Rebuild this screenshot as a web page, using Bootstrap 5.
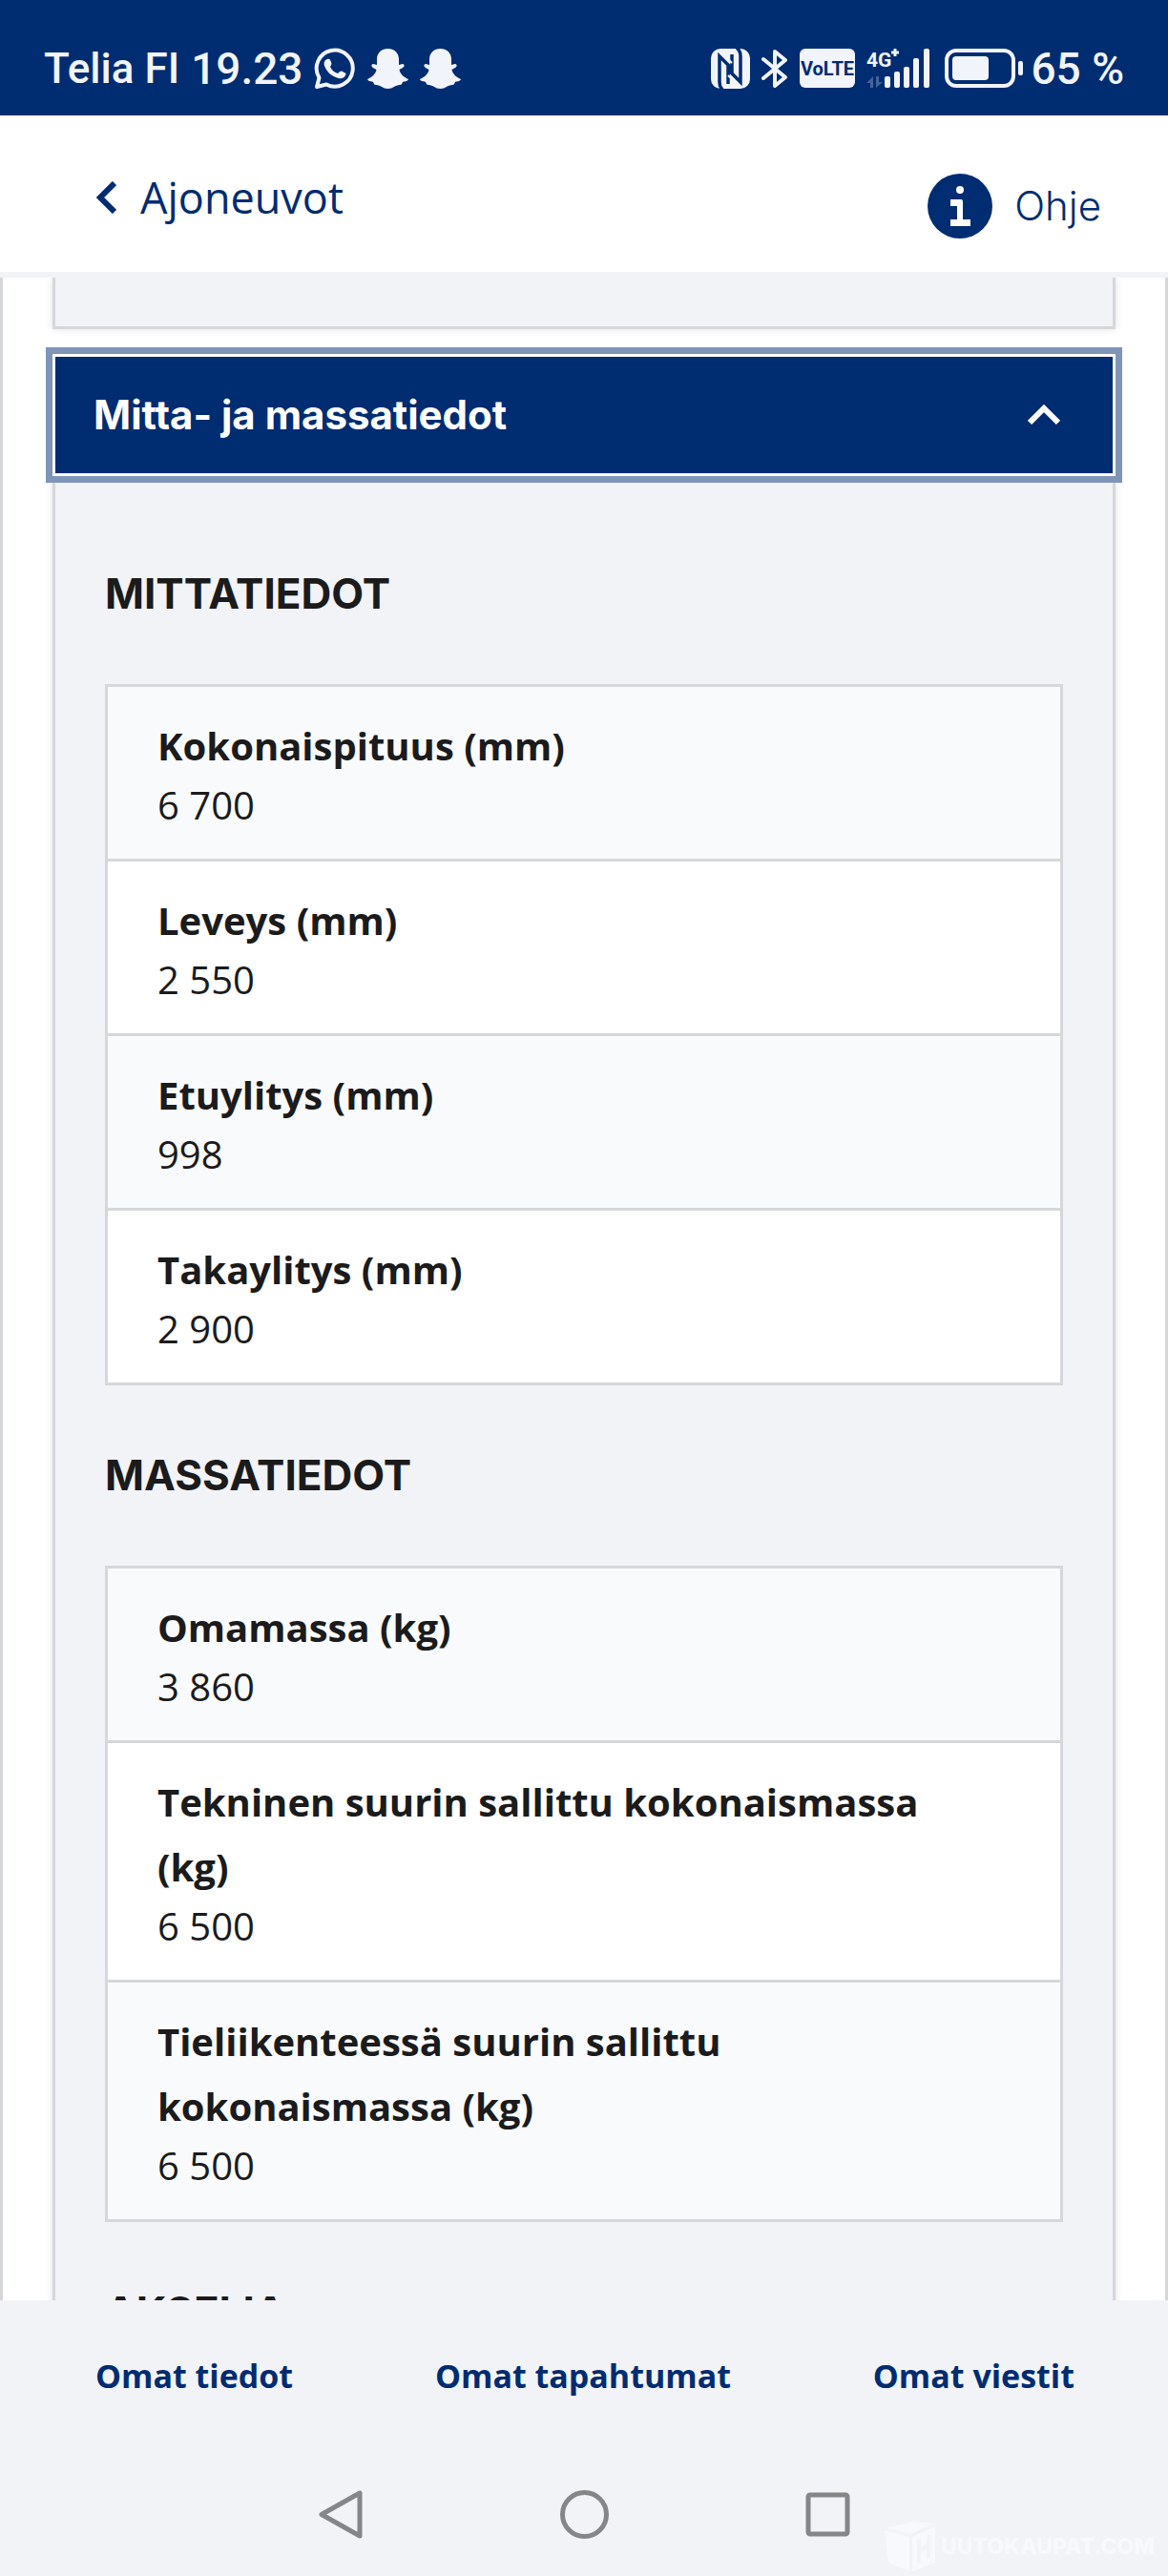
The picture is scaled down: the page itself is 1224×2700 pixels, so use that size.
<!DOCTYPE html>
<html lang="fi">
<head>
<meta charset="utf-8">
<meta name="viewport" content="width=device-width, initial-scale=1">
<title>Ajoneuvot</title>
<link href="https://cdn.jsdelivr.net/npm/bootstrap@5.3.0/dist/css/bootstrap.min.css" rel="stylesheet">
<style>
:root { --navy: #002c71; --pale: #f2f3f7; --line: #d6d7da; --ink: #1b1b1c; }
body { font-family: "Open Sans", sans-serif; color: var(--ink); background: #fff; }
.status-bar { background: var(--navy); color: #f1f4fb; font-family: Roboto, sans-serif; font-weight: 500; padding: 23px 46px 0; height: 121px; line-height: 98px; }
.status-bar .carrier { font-size: 44px; }
.status-bar .clock { font-size: 46px; }
.status-bar .icons { gap: 12px; }
.battery { margin-right: -5px; }
.app-header { padding: 0 70px 0 101px; height: 170px; border-bottom: 6px solid var(--pale); }
.app-header a { color: var(--navy); }
.back-link { font-size: 45px; gap: 25px; line-height: 60px; padding-top: 8px; }
.help-link { font-family: Inter, sans-serif; font-weight: 300; font-size: 42px; gap: 23px; line-height: 50px; padding-top: 26px; }
.app-main { border: solid var(--line); border-width: 0 3px; padding: 0 52px; }
.panel { background: var(--pale); border: 3px solid var(--line); box-shadow: 0 0 8px rgba(0,0,0,.12); }
.panel-prev { border-top: 0; height: 54px; margin-bottom: 26px; }
.panel-toggle { background: var(--navy); color: #fff; border: 3px solid #fff; border-radius: 0; box-shadow: 0 0 0 7px #7f95b8; font-family: Inter, sans-serif; font-weight: 700; font-size: 42px; line-height: 60px; padding: 31px 55px 31px 40px; position: relative; z-index: 1; }
.panel-toggle:hover { background: var(--navy); color: #fff; border-color: #fff; }
.panel-open { border-top: 0; padding: 29px 52px 0; }
.section-title { font-family: Inter, sans-serif; font-weight: 700; font-size: 44px; line-height: 61px; margin: 64px 0; }
.facts { border: 3px solid var(--line); margin: 0; font-size: 40px; }
.facts > div { background: #fff; padding: 28px 104px 28px 52px; }
.facts > div:nth-child(odd) { background: #f9fafc; }
.facts > div + div { border-top: 3px solid var(--line); }
.facts dt { font-weight: 700; line-height: 68px; }
.facts dd { margin: 0; line-height: 56px; }
.app-footer { background: var(--pale); }
.tab-links { padding: 0 98px 0 100px; height: 160px; }
.tab-links a { color: var(--navy); font-weight: 700; font-size: 34px; line-height: 50px; padding-bottom: 2px; }
.system-nav { height: 129px; gap: 204px; }
.system-nav button { line-height: 1; border-radius: 0; }
.watermark { position: absolute; right: 14px; bottom: 5px; gap: 5px; color: #f8f9fc; font-family: Inter, sans-serif; font-weight: 800; font-size: 23px; }
svg { display: block; flex: none; }
</style>
</head>
<body class="vh-100 d-flex flex-column overflow-hidden">

<div class="status-bar d-flex justify-content-between flex-shrink-0">
  <div class="d-flex align-items-center icons">
    <span class="carrier">Telia FI</span>
    <span class="clock">19.23</span>
    <svg width="44" height="44" viewBox="0 0 44 44" fill="none" stroke="#f1f4fb"><path d="M3 41 5.500 31.500A19 19 0 1 1 13 38.500Z" stroke-width="4" stroke-linejoin="round"/><path d="M14 12c2-1 3 0 4 3 1 2 0 3-1 5 2 4 5 6 8 7 2-2 3-3 5-2 4 2 4 2 3 4-2 4-6 4-10 2-6-2-10-7-12-12-1-3 0-6 3-7Z" fill="#f1f4fb" stroke="none"/></svg>
    <svg width="43" height="42" viewBox="0 0 43 42" fill="#f1f4fb"><path id="ghost" d="M21.500 0C28 0 33 4.500 33 11v6c2 0 4-2 5.500 0 1 2-3 4-5 5 1 5 5 8 9.500 10-1 3-5 2-6 3-1 2-1 3-3 3-5 0-7 4-12.500 4S14 38 9 38c-2 0-2-1-3-3-1-1-5 0-6-3 4.500-2 8.500-5 9.500-10-2-1-6-3-5-5 1.500-2 3.500 0 5.500 0v-6C10 4.500 15 0 21.500 0Z"/></svg>
    <svg width="43" height="42" viewBox="0 0 43 42" fill="#f1f4fb"><use href="#ghost"/></svg>
  </div>
  <div class="d-flex align-items-center icons">
    <svg width="41" height="42" viewBox="0 0 41 42"><rect width="41" height="42" rx="10" fill="#f1f4fb"/><path d="M12 43Q9 40 9 35V8L22 21V6M27 -1Q31 2 31 8V35L18 22V37" fill="none" stroke="#002c71" stroke-width="3.500"/><path d="M13 6 22 15M18 28 27 37" stroke="#f1f4fb" stroke-width="2"/></svg>
    <svg width="28" height="42" viewBox="0 0 28 42" fill="none" stroke="#f1f4fb" stroke-width="4" stroke-linejoin="round" stroke-linecap="round"><path d="M2 11 25 30 14 39V3L25 12 2 31"/></svg>
    <svg width="58" height="42" viewBox="0 0 58 42"><rect width="58" height="41" rx="6" fill="#f1f4fb"/><text x="29" y="28" text-anchor="middle" font-family="Roboto" font-weight="700" font-size="20" fill="#002c71">VoLTE</text></svg>
    <svg width="70" height="42" viewBox="0 0 70 42" fill="#f1f4fb"><text x="0" y="19" font-family="Roboto" font-weight="700" font-size="21">4G</text><path d="M30 0v8M26 4h8" stroke="#f1f4fb" stroke-width="3"/><path d="M0 36 7 29V41H4V36ZM10 29V41L17 35H13V29Z" fill="#44639b"/><rect x="19" y="29" width="6" height="12" rx="2"/><rect x="29" y="24" width="6" height="17" rx="2"/><rect x="39" y="19" width="6" height="22" rx="2"/><rect x="49" y="10" width="6" height="31" rx="2"/><rect x="60" y="0" width="6" height="41" rx="2"/></svg>
    <svg class="battery" width="83" height="42" viewBox="0 0 83 42" fill="#f1f4fb"><rect x="2" y="2" width="70" height="37" rx="10" fill="none" stroke="#f1f4fb" stroke-width="4"/><rect x="8" y="8" width="38" height="25" rx="4"/><rect x="77" y="13" width="5" height="15" rx="2"/></svg>
    <span class="clock">65 %</span>
  </div>
</div>

<header class="app-header d-flex justify-content-between align-items-center flex-shrink-0">
  <a href="#" class="back-link d-flex align-items-center text-decoration-none">
    <svg width="21" height="34" viewBox="0 0 21 34" fill="none" stroke="#002c71" stroke-width="6"><path d="M19 2 4 17 19 32"/></svg>
    Ajoneuvot
  </a>
  <a href="#" class="help-link d-flex align-items-center text-decoration-none">
    <svg width="68" height="68" viewBox="0 0 68 68"><circle cx="34" cy="34" r="34" fill="#002c71"/><circle cx="34" cy="17" r="4" fill="#fff"/><path d="M24 27H35Q37 27 37 29V48H45V55H24V48H31V34H24Z" fill="#fff"/></svg>
    Ohje
  </a>
</header>

<main class="app-main flex-grow-1 overflow-hidden">
  <div class="panel panel-prev"></div>
  <section>
    <button type="button" class="panel-toggle btn w-100 d-flex justify-content-between align-items-center" aria-expanded="true" aria-controls="mitat">
      Mitta- ja massatiedot
      <svg width="34" height="22" viewBox="0 0 34 22" fill="none" stroke="#fff" stroke-width="6"><path d="M2 19 17 4 32 19"/></svg>
    </button>
    <div id="mitat" class="panel panel-open">
      <h2 class="section-title">MITTATIEDOT</h2>
      <dl class="facts">
        <div><dt>Kokonaispituus (mm)</dt><dd>6 700</dd></div>
        <div><dt>Leveys (mm)</dt><dd>2 550</dd></div>
        <div><dt>Etuylitys (mm)</dt><dd>998</dd></div>
        <div><dt>Takaylitys (mm)</dt><dd>2 900</dd></div>
      </dl>
      <h2 class="section-title">MASSATIEDOT</h2>
      <dl class="facts">
        <div><dt>Omamassa (kg)</dt><dd>3 860</dd></div>
        <div><dt>Tekninen suurin sallittu kokonaismassa (kg)</dt><dd>6 500</dd></div>
        <div><dt>Tieliikenteessä suurin sallittu kokonaismassa (kg)</dt><dd>6 500</dd></div>
      </dl>
      <h2 class="section-title">AKSELIA</h2>
    </div>
  </section>
</main>

<footer class="app-footer position-relative flex-shrink-0">
  <nav class="tab-links d-flex justify-content-between align-items-center">
    <a href="#" class="text-decoration-none">Omat tiedot</a>
    <a href="#" class="text-decoration-none">Omat tapahtumat</a>
    <a href="#" class="text-decoration-none">Omat viestit</a>
  </nav>
  <div class="system-nav d-flex justify-content-center align-items-center">
    <button type="button" class="btn border-0 p-0" aria-label="Takaisin"><svg width="51" height="51" viewBox="0 0 51 51" fill="none" stroke="#858688" stroke-width="5" stroke-linejoin="round"><path d="M45 3V48L5 25.500Z"/></svg></button>
    <button type="button" class="btn border-0 p-0" aria-label="Koti"><svg width="51" height="51" viewBox="0 0 51 51" fill="none" stroke="#858688" stroke-width="5"><circle cx="25.500" cy="25.500" r="23"/></svg></button>
    <button type="button" class="btn border-0 p-0" aria-label="Viimeisimmät"><svg width="51" height="51" viewBox="0 0 51 51" fill="none" stroke="#858688" stroke-width="5"><rect x="5" y="5" width="41" height="41" rx="2"/></svg></button>
  </div>
  <div class="watermark d-flex align-items-center">
    <svg width="54" height="52" viewBox="0 0 54 52" fill="#f8f9fc"><path d="M2 7 28 0 52 2 27 13ZM0 9 26 16V52L4 43ZM29 16 53 5V43L29 52ZM34 20V44L38 42V32L44 29V39L48 37V13L44 15V24L38 27V18Z" fill-rule="evenodd"/></svg>
    UUTOKAUPAT.COM
  </div>
</footer>

<script src="https://cdn.jsdelivr.net/npm/bootstrap@5.3.0/dist/js/bootstrap.bundle.min.js"></script>
</body>
</html>
